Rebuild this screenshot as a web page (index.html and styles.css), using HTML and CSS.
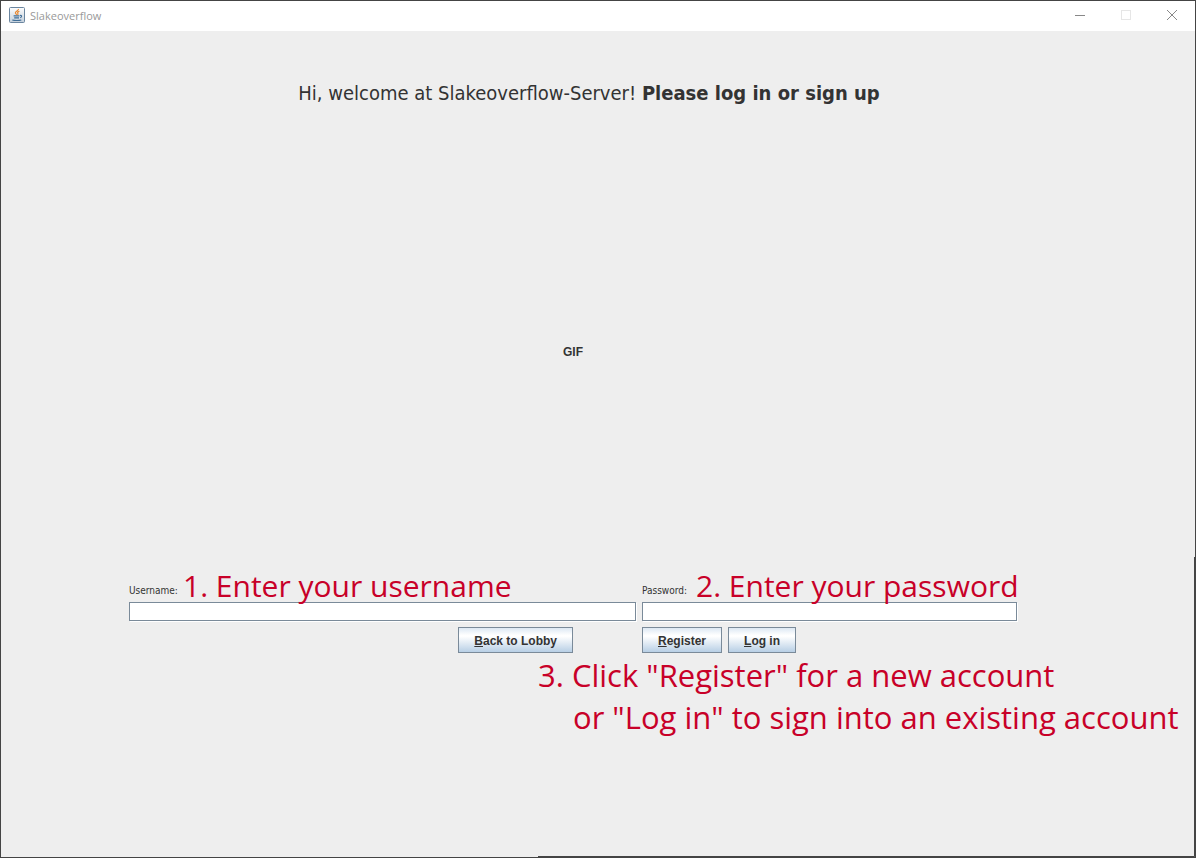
FILE: index.html
```
<!DOCTYPE html>
<html lang="en">
<head>
<meta charset="utf-8">
<title>Slakeoverflow</title>
<link rel="stylesheet" href="styles.css">
</head>
<body>
<div class="window">
  <header class="titlebar">
    <svg class="app-icon" width="16" height="16" viewBox="0 0 16 16" aria-hidden="true">
      <defs><linearGradient id="tile" x1="0" y1="0" x2="0" y2="1"><stop offset="0" stop-color="#fdfdfd"/><stop offset="1" stop-color="#c3cfdb"/></linearGradient></defs>
      <rect x=".5" y=".5" width="15" height="15" rx="1" fill="url(#tile)" stroke="#6a859f"/>
      <path d="M9.400 2C10 3.600 6.200 4.300 6.400 6c.1.700 1 1.100 1.300 1.900M10.400 4.300C8.400 5 8.300 5.700 8.900 6.500c.3.5 0 .9-.4 1.300" fill="none" stroke="#e8872e" stroke-width="1.200"/>
      <path d="M4.600 8.900h5.800M5.200 10.900h4.800M3.300 12.900c2 .7 7 .7 9 0M11 8.500c2-.5 2.200 1.500.2 2.100" fill="none" stroke="#3f6d96" stroke-width="1.100"/>
    </svg>
    <span class="caption">Slakeoverflow</span>
    <div class="controls">
      <button class="control" type="button" aria-label="Minimize"><svg width="12" height="12" viewBox="0 0 12 12"><path d="M1 5.500h10" stroke="#888"/></svg></button>
      <button class="control" type="button" aria-label="Maximize" disabled><svg width="12" height="12" viewBox="0 0 12 12"><rect x="1.500" y="0.500" width="9" height="9" fill="none" stroke="#e6e6e6"/></svg></button>
      <button class="control" type="button" aria-label="Close"><svg width="12" height="12" viewBox="0 0 12 12"><path d="M1 0l10 10M11 0L1 10" stroke="#888"/></svg></button>
    </div>
  </header>
  <main class="content">
    <h1 class="welcome">Hi, welcome at Slakeoverflow-Server! <b>Please log in or sign up</b></h1>
    <div class="preview">GIF</div>
    <form class="login">
      <div class="field">
        <label class="label" for="username">Username:</label>
        <input class="input" id="username" type="text">
        <span class="note note-field">1. Enter your username</span>
      </div>
      <div class="field">
        <label class="label" for="password">Password:</label>
        <input class="input" id="password" type="password">
        <span class="note note-field">2. Enter your password</span>
      </div>
      <div class="actions actions-back">
        <button class="button" type="button"><u>B</u>ack to Lobby</button>
      </div>
      <div class="actions">
        <button class="button" type="button"><u>R</u>egister</button>
        <button class="button" type="button"><u>L</u>og in</button>
      </div>
      <p class="note note-submit">3. Click "Register" for a new account<span class="note-line">or "Log in" to sign into an existing account</span></p>
    </form>
  </main>
</div>
</body>
</html>
```
FILE: styles.css
```
* { box-sizing: border-box; }

body {
  margin: 0;
  background: #eeeeee;
  color: #333333;
  font-family: "Noto Sans", sans-serif;
}

.window {
  display: flex;
  flex-direction: column;
  min-height: 100vh;
  border: 1px solid #444444;
  background:
    linear-gradient(#444444, #444444) right bottom / 1px 35% no-repeat,
    linear-gradient(#444444, #444444) right bottom / 55% 1px no-repeat,
    #eeeeee;
}

.titlebar {
  display: flex;
  align-items: center;
  height: 30px;
  padding-left: 8px;
  background: #ffffff;
}

.app-icon {
  margin-bottom: 2px;
}

.caption {
  margin-left: 5px;
  color: #999999;
  font-family: "Open Sans", sans-serif;
  font-size: 11px;
  line-height: 16px;
}

.controls {
  display: flex;
  margin-left: auto;
}

.control {
  display: grid;
  place-items: center;
  width: 46px;
  height: 30px;
  padding: 0;
  border: 0;
  background: none;
}

.content {
  display: flex;
  flex: 1;
  flex-direction: column;
  padding: 48px 178px 204px 128px;
}

.welcome {
  margin: 0 0 0 32px;
  font-family: "DejaVu Sans Condensed", "DejaVu Sans", sans-serif;
  font-size: 20px;
  font-weight: 400;
  line-height: 28px;
  text-align: center;
}

.preview {
  display: grid;
  flex: 1;
  place-items: center;
  padding-top: 12px;
  font-family: "Liberation Sans", sans-serif;
  font-size: 12px;
  font-weight: 700;
}

.login {
  position: relative;
  display: grid;
  grid-template-columns: 507fr 375fr;
  gap: 6px;
}

.field {
  position: relative;
}

.label {
  display: block;
  margin-bottom: 4px;
  font-family: "DejaVu Sans Condensed", "DejaVu Sans", sans-serif;
  font-size: 10px;
  line-height: 14px;
}

.input {
  display: block;
  width: 100%;
  height: 19px;
  padding: 0 4px;
  border: 1px solid #7a8a99;
  background: #ffffff;
  box-shadow: 1px 1px #ffffff;
  font-size: 12px;
}

.actions {
  display: flex;
  gap: 6px;
}

.actions-back {
  justify-content: flex-end;
  padding-right: 63px;
}

.button {
  height: 26px;
  padding: 1px 15px 0;
  border: 1px solid #7a8a99;
  background: linear-gradient(#dde8f3, #ffffff 30%, #ffffff 35%, #b8cfe5);
  color: #333333;
  font-family: "Liberation Sans", sans-serif;
  font-size: 12px;
  font-weight: 700;
}

.note {
  position: absolute;
  margin: 0;
  color: #c80028;
  font-family: "Open Sans", sans-serif;
  line-height: 42px;
  white-space: nowrap;
  pointer-events: none;
}

.note-field {
  top: -19px;
  left: 54px;
  font-size: 30px;
}

.note-submit {
  top: 70px;
  left: 409px;
  font-size: 31px;
}

.note-line {
  display: block;
  padding-left: 35px;
}
```
